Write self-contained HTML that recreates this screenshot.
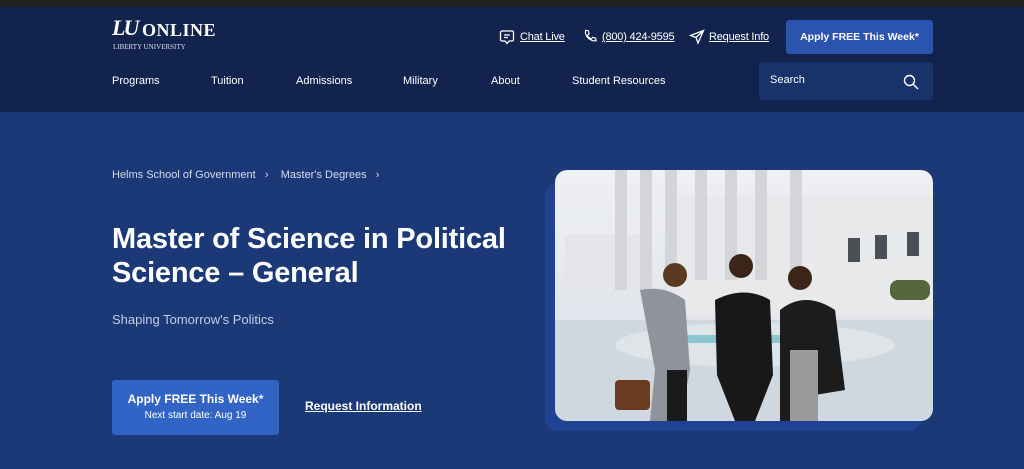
<!DOCTYPE html>
<html><head><meta charset="utf-8"><style>
*{margin:0;padding:0;box-sizing:border-box}
body{width:1024px;height:469px;overflow:hidden;background:#1b3877;font-family:"Liberation Sans",sans-serif;color:#fff;position:relative}
.top{position:absolute;left:0;top:0;width:1024px;height:7px;background:#222}
.hdr{position:absolute;left:0;top:7px;width:1024px;height:105px;background:#12244e}
.a{position:absolute;white-space:nowrap}
.link{font-size:11px;text-decoration:underline;color:#fff;letter-spacing:-0.2px}
.nav{font-size:11px;top:75px}
</style></head><body>
<div class="top"></div>
<div class="hdr"></div>
<div class="a" style="left:112px;top:15px;font-family:'Liberation Serif',serif;font-weight:bold;font-size:22px;font-style:italic;letter-spacing:-2px">LU</div>
<div class="a" style="left:142px;top:20px;font-family:'Liberation Serif',serif;font-weight:bold;font-size:18px;letter-spacing:0.5px">ONLINE</div>
<div class="a" style="left:113px;top:43px;font-family:'Liberation Serif',serif;font-size:7px;color:#dde">LIBERTY UNIVERSITY</div>

<svg class="a" style="left:499px;top:29px" width="16" height="16" viewBox="0 0 16 16" fill="none" stroke="#fff" stroke-width="1.3"><path d="M3 2h10a1.5 1.5 0 0 1 1.5 1.5v7A1.5 1.5 0 0 1 13 12H10l-2 2.5L6 12H3a1.5 1.5 0 0 1-1.5-1.5v-7A1.5 1.5 0 0 1 3 2z"/><path d="M5 6h6M5 8.5h4"/></svg>
<div class="a link" style="left:520px;top:31px">Chat Live</div>
<svg class="a" style="left:583px;top:29px" width="14" height="14" viewBox="0 0 16 16" fill="none" stroke="#fff" stroke-width="1.3"><path d="M3 1.5l3 .5 1 3.5-2 1.5a9 9 0 0 0 4.5 4.5l1.5-2 3.5 1 .5 3c-7 1-13.5-5.5-12-12z"/></svg>
<div class="a link" style="left:602px;top:31px">(800) 424-9595</div>
<svg class="a" style="left:689px;top:29px" width="16" height="16" viewBox="0 0 16 16" fill="none" stroke="#fff" stroke-width="1.3"><path d="M14.5 1.5L1.5 6.5l5.5 2 2 5.5z M7 8.5l7.5-7"/></svg>
<div class="a link" style="left:709px;top:31px">Request Info</div>
<div class="a" style="left:786px;top:20px;width:147px;height:34px;background:#2a54ae;border-radius:3px;font-size:10.5px;font-weight:bold;text-align:center;line-height:34px">Apply FREE This Week*</div>

<div class="a nav" style="left:112px">Programs</div>
<div class="a nav" style="left:211px">Tuition</div>
<div class="a nav" style="left:296px">Admissions</div>
<div class="a nav" style="left:403px">Military</div>
<div class="a nav" style="left:491px">About</div>
<div class="a nav" style="left:572px">Student Resources</div>
<div class="a" style="left:759px;top:62px;width:174px;height:38px;background:#18336a;border-radius:3px"></div>
<div class="a" style="left:770px;top:74px;font-size:11px">Search</div>
<svg class="a" style="left:903px;top:74px" width="16" height="16" viewBox="0 0 16 16" fill="none" stroke="#fff" stroke-width="1.4"><circle cx="6.5" cy="6.5" r="5"/><path d="M10 10l5 5"/></svg>

<div class="a" style="left:112px;top:169px;font-size:11px;color:#d5dcec">Helms School of Government &nbsp;&nbsp;›&nbsp;&nbsp;&nbsp; Master's Degrees &nbsp;&nbsp;›</div>
<div class="a" style="left:112px;top:222px;font-size:29px;line-height:34px;font-weight:bold;letter-spacing:-0.2px">Master of Science in Political<br>Science – General</div>
<div class="a" style="left:112px;top:312px;font-size:13px;color:#c4cde4">Shaping Tomorrow's Politics</div>
<div class="a" style="left:112px;top:380px;width:167px;height:55px;background:#3264c6;border-radius:3px;text-align:center">
<div style="font-size:12px;font-weight:bold;margin-top:12px">Apply FREE This Week*</div>
<div style="font-size:10px;margin-top:4px">Next start date: Aug 19</div></div>
<div class="a" style="left:305px;top:399px;font-size:12px;font-weight:bold;text-decoration:underline">Request Information</div>

<div class="a" style="left:545px;top:183px;width:376px;height:248px;background:#1f4390;border-radius:12px"></div>
<svg class="a" style="left:555px;top:170px;border-radius:12px" width="378" height="251" viewBox="0 0 378 251">
<defs><clipPath id="c"><rect width="378" height="251" rx="12"/></clipPath>
<linearGradient id="g" x1="0" y1="0" x2="0" y2="1"><stop offset="0" stop-color="#eef0f3"/><stop offset="1" stop-color="#d9dfe6"/></linearGradient></defs>
<g clip-path="url(#c)">
<rect width="378" height="251" fill="url(#g)"/>
<rect x="10" y="65" width="80" height="50" fill="#e3e5e8"/>
<rect x="120" y="25" width="260" height="120" fill="#e8e9ea"/>
<g fill="#d3d5d8"><rect x="60" y="0" width="12" height="120"/><rect x="85" y="0" width="12" height="120"/><rect x="110" y="0" width="12" height="110"/><rect x="140" y="0" width="12" height="110"/><rect x="170" y="0" width="12" height="110"/><rect x="200" y="0" width="12" height="110"/><rect x="235" y="0" width="12" height="110"/></g>
<g fill="#4a4f55"><rect x="293" y="68" width="12" height="24"/><rect x="320" y="65" width="12" height="24"/><rect x="352" y="62" width="12" height="24"/></g>
<rect x="335" y="110" width="40" height="20" fill="#55663a" rx="8"/>
<rect x="0" y="150" width="378" height="101" fill="#cfd7df"/>
<ellipse cx="200" cy="175" rx="140" ry="22" fill="#dfe4e8"/>
<rect x="130" y="165" width="130" height="8" fill="#8cc6cf"/>
<path d="M85 120 Q110 115 130 130 L135 200 L125 251 L95 251 L100 200 Z" fill="#8f949c"/>
<rect x="112" y="200" width="20" height="51" fill="#1a1a1a"/>
<circle cx="120" cy="105" r="12" fill="#5a3a25"/>
<rect x="60" y="210" width="35" height="30" rx="4" fill="#6b3a20"/>
<path d="M160 130 Q190 115 215 130 L218 205 L200 251 L180 251 L162 205 Z" fill="#181818"/>
<circle cx="186" cy="96" r="12" fill="#3a2518"/>
<path d="M225 140 Q250 120 280 140 L290 220 L260 225 L240 251 L225 251 Z" fill="#1c1c1c"/>
<rect x="235" y="180" width="28" height="71" fill="#9a9a9a"/>
<circle cx="245" cy="108" r="12" fill="#3a2518"/>
</g></svg>
</body></html>
